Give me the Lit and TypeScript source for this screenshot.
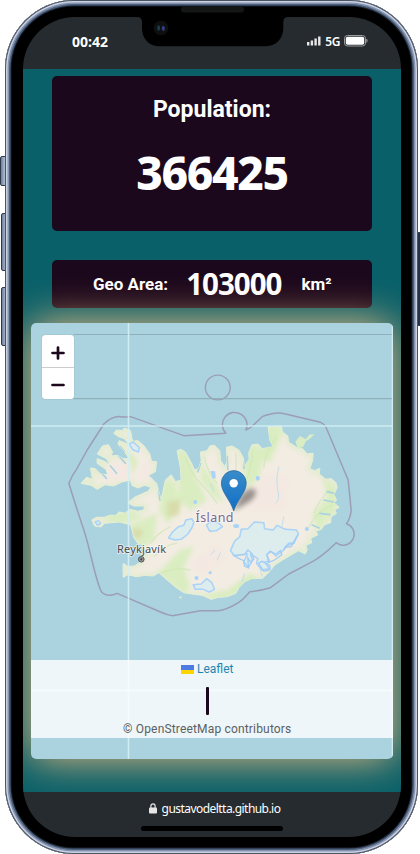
import { LitElement, html, css, svg } from "lit";
import { customElement } from "lit/decorators.js";

const LAND =
  "M190 100 L198 90 215 92 222 84 240 92 246 124 262 122 280 137 298 162 303 184 318 185 315 215 294 226 318 250 322 264 332 300 340 262 345 240 362 224 375 245 392 240 390 205 380 152 392 148 405 157 422 188 432 210 444 206 452 182 450 156 470 152 478 138 492 136 508 152 510 180 522 200 530 184 528 142 545 138 565 150 578 172 582 200 596 178 595 158 604 135 622 132 635 146 668 140 658 120 653 80 692 78 696 96 712 108 714 126 738 142 756 146 770 162 788 160 786 182 778 206 792 212 808 205 806 222 826 238 842 236 856 248 860 262 850 284 858 300 850 308 866 322 852 330 858 340 842 350 840 368 822 374 812 388 796 394 802 404 780 416 784 428 766 436 770 450 764 462 744 452 720 466 696 480 672 496 656 516 636 535 602 536 582 546 566 562 556 580 530 590 504 592 482 598 455 586 424 582 400 578 376 562 350 540 325 518 308 528 284 526 258 530 232 524 218 532 218 490 232 500 252 498 270 486 278 468 290 462 276 446 282 436 262 430 250 412 246 396 240 374 206 366 162 370 152 381 132 378 124 360 138 352 162 352 178 346 196 346 206 336 224 340 238 328 262 334 280 330 282 318 250 318 232 308 252 292 292 274 302 262 282 256 262 264 244 256 240 240 214 246 190 258 164 254 140 268 122 256 92 250 108 232 126 238 120 204 134 206 150 222 172 224 166 208 140 190 140 176 162 184 180 196 168 176 140 162 156 138 174 134 186 156 182 168 200 166 218 176 236 176 220 152 202 132 206 122 236 134 222 116 204 110Z";
const BORDER =
  "M55 250 Q65 225 78 208 L110 150 160 72 Q185 48 210 50 Q225 52 240 50 L400 107 526 100 A37 37 0 1 1 586 90 Q596 86 606 78 L635 50 Q645 45 660 42 Q685 36 702 41 L810 67 Q824 72 830 90 L893 240 902 330 Q900 355 888 371 A33 33 0 1 1 857 428 Q810 475 770 493 L715 522 660 563 Q630 572 598 575 Q575 602 560 610 Q530 628 505 632 H450 L366 647 Q350 645 330 636 L200 580 Q185 587 170 585 Q155 582 150 570 C130 520 120 450 100 390 Q70 300 55 250Z";

const GREENS = [
  "M380 150 L405 157 440 240 470 300 420 330 380 300 390 230Z",
  "M345 240 L375 250 390 330 350 370 325 330Z",
  "M600 135 L640 150 628 230 590 290 580 210Z",
  "M654 80 H692 L690 115 660 185 630 180Z",
  "M450 190 L500 260 520 310 490 290 452 240Z",
  "M815 235 L855 260 855 330 800 390 785 345 830 290Z",
  "M325 515 L390 450 430 440 400 500 420 560 400 578Z",
  "M240 375 L320 340 310 420 270 440Z",
  "M232 150 L262 180 250 220 235 210Z",
  "M455 585 L530 570 600 520 620 535 560 580 500 598Z",
  "M155 350 L240 335 280 355 200 370Z",
];

const GLACIERS = [
  "M540 452 L552 424 568 410 572 388 592 386 612 366 640 368 642 386 668 390 680 376 704 388 738 390 744 402 730 430 706 438 696 454 676 468 662 454 648 464 658 484 644 486 656 506 634 510 618 490 622 476 600 462 606 482 594 502 580 486 590 462 570 464 552 468Z",
  "M354 414 L366 396 384 380 400 376 406 360 424 356 430 368 424 384 412 402 392 418 374 420Z",
  "M452 552 L468 536 484 548 492 568 476 576 458 568 434 568 428 554Z",
  "M468 376 L480 364 504 368 516 380 498 392 478 394Z",
  "M236 132 L248 126 266 142 264 156 248 150Z",
  "M134 366 L144 362 150 370 142 376Z",
];

@customElement("country-map")
class CountryMap extends LitElement {
  static styles = css`
    :host {
      display: block;
      position: relative;
      width: 362.5px;
      height: 435.5px;
      margin-left: 0.5px;
      border-radius: 5px;
      box-shadow: 0 0 40px #eebd84;
    }
    .tiles {
      display: block;
      border-radius: 5px;
      background: #abd3df;
    }
    .place {
      font-family: "Noto Sans", sans-serif;
      paint-order: stroke;
      stroke: rgba(255, 255, 255, 0.55);
      stroke-width: 2px;
      stroke-linejoin: round;
    }
    .zoom {
      position: absolute;
      left: 11.5px;
      top: 12px;
      width: 32px;
      height: 64px;
      display: grid;
      grid-template-rows: 1fr 1fr;
      background: #fff;
      border-radius: 3px;
      overflow: hidden;
      box-shadow: 0 0 1px rgba(60, 80, 90, 0.6);
    }
    .zoom span {
      display: flex;
      align-items: center;
      justify-content: center;
      padding-top: 3px;
    }
    .zoom span + span {
      border-top: 1px solid #ccc;
    }
    .credit {
      position: absolute;
      left: 0;
      right: 0;
      bottom: 21px;
      height: 78px;
      box-sizing: border-box;
      padding: 2px 9px 0 0;
      display: flex;
      flex-direction: column;
      align-items: center;
      background: rgba(255, 255, 255, 0.8);
      font: 12px/15px Roboto, sans-serif;
      color: #5a6064;
    }
    .leaflet {
      display: flex;
      align-items: center;
      gap: 3px;
      color: #1d86b0;
    }
    .flag {
      width: 13px;
      height: 9px;
      background: linear-gradient(#4c7be1 50%, #ffd500 50%);
    }
    .bar {
      width: 3px;
      height: 28px;
      margin: 10px 0 7px;
      border-radius: 1px;
      background: #1c081c;
    }
    .osm {
      letter-spacing: 0.17px;
      white-space: nowrap;
    }
  `;

  render() {
    return html`
      <svg class="tiles" width="362.5" height="435.5" viewBox="30.5 323 362.5 435.5">
        <defs>
          <clipPath id="land"><path d=${LAND} /></clipPath>
          <filter id="soft"><feGaussianBlur stdDeviation="7" /></filter>
          <filter id="edge"><feGaussianBlur stdDeviation="1.5" /></filter>
          <filter id="shade" x="-50%" y="-50%" width="200%" height="200%"><feGaussianBlur stdDeviation="2.6" /></filter>
          <linearGradient id="pin" x1="0" y1="0" x2="0" y2="1">
            <stop offset="0" stop-color="#3a8cc9" />
            <stop offset="1" stop-color="#126fc6" />
          </linearGradient>
        </defs>
        <g transform="translate(50 400) scale(.33333)">
          <g filter="url(#edge)">
            <path d=${LAND} fill="#f2ece2" stroke="#e9efd9" stroke-width="3" />
            <path d="M735 125 L748 108 766 118 776 104 792 102 778 116 766 124 758 140 742 146Z" fill="#d9edc4" />
            <g clip-path="url(#land)">
              <g filter="url(#soft)">
                <path d=${LAND} fill="none" stroke="#dcecc6" stroke-width="18" opacity=".6" />
                ${GREENS.map((d) => svg`<path d=${d} fill="#d4edb9" opacity=".8" />`)}
                <path d="M350 305 L390 300 385 345 350 350Z M245 385 L280 390 265 420 248 412Z" fill="#d8dcaa" />
                <path d="M420 490 L500 430 530 480 450 530Z M650 220 L720 230 700 330 580 330 560 290Z M170 190 L240 180 240 240 160 250Z M255 240 L300 160 300 240Z" fill="#f4e9e2" />
              </g>
              <g fill="none" stroke="#cfe8b5" stroke-width="4" opacity=".75">
                <path d="M405 170 Q420 220 450 250 T500 310 M462 170 Q470 220 500 250 M555 160 Q560 220 550 240 M608 150 Q600 220 580 260 M680 110 Q640 160 640 205 M840 270 Q810 290 790 340 M845 315 Q800 330 770 390 M360 380 Q320 400 300 430 M310 470 Q350 430 380 430 M330 520 Q370 500 420 510" />
              </g>
              <g fill="none" stroke="#b7ddea" stroke-width="2.5">
                <path d="M685 200 Q675 240 682 270 T675 310 M700 350 L694 380 M618 228 L624 240 M480 250 L490 275 M575 545 L582 520 M636 530 L628 505 M480 465 L494 450 M500 480 L510 458 M535 300 L540 280" />
              </g>
              <g stroke="#abd3df" stroke-width="5" stroke-linecap="round" fill="none">
                <path d="M205 168 L225 190 M180 198 L198 220 M140 205 L168 235 M210 140 L222 155 M530 170 L532 210 M450 190 L442 215 M325 270 L328 300 M583 180 L580 205 M830 275 L850 280 M820 300 L848 306 M808 340 L838 344 M785 375 L806 384" />
              </g>
            </g>
            ${GLACIERS.map(
              (d) => svg`<path d=${d} fill="#ddecec" stroke="#a9d3f8" stroke-width="4.5" stroke-linejoin="round" />`
            )}
            <g fill="#a9d3f8">
              <circle cx="438" cy="534" r="6" />
              <circle cx="479" cy="518" r="5" />
              <circle cx="769" cy="387" r="6" />
              <ellipse cx="557" cy="378" rx="9" ry="6" />
              <ellipse cx="622" cy="235" rx="6" ry="7" />
              <circle cx="434" cy="306" r="6" />
              <path d="M480 213 L494 214 496 234 486 236Z" />
              <path d="M550 466 L582 464 592 450 604 460 610 478 600 486 592 474 594 504 582 498 580 482 566 476Z M624 490 L634 484 658 496 658 510 640 514Z M650 464 L658 454 676 462 690 452 694 464 672 480 654 488Z" fill="none" stroke="#a2cef6" stroke-width="4" />
              <path d="M700 450 L714 430 728 428 742 404 M708 442 L722 440 734 420" fill="none" stroke="#a2cef6" stroke-width="4" />
            </g>
            <circle cx="390" cy="592" r="3.5" fill="#dcecc6" />
          </g>
          <path d=${BORDER} fill="none" stroke="#9a97b3" stroke-width="4.5" stroke-linejoin="round" opacity=".9" />
        </g>
        <circle cx="217.3" cy="387.5" r="12.4" fill="none" stroke="#9a97b3" stroke-width="1.4" opacity=".9" />
        <path d="M73 334.5 H393 M73 398.6 H393" stroke="#8fb0ba" stroke-width="1.1" />
        <path d="M128 323 V759 M392 323 V759 M30 426 H393 M30 690.5 H393" stroke="#d4f0f6" stroke-width="1.6" opacity=".9" />

        <text class="place" x="116.5" y="553" font-size="11" fill="#4b4b4b" textLength="49">Reykjavík</text>
        <circle cx="140.8" cy="559.3" r="2.8" fill="#999" stroke="#555" stroke-width="1" />
        <circle cx="140.8" cy="559.3" r="1.1" fill="#444" />
        <text class="place" x="195" y="521.5" font-size="12.5" fill="#7d6591" textLength="38">Ísland</text>

        <path d="M233 511 L240 496 Q247 487 254 489 Q258 494 250 501Z" fill="#000" opacity=".38" filter="url(#shade)" />
        <path
          d="M233.2 511 C232 506 228.5 501 225 495 C222.6 491 220.9 487.5 220.9 483 A12.4 12.4 0 0 1 245.7 483 C245.7 487.5 244 491 241.500 495 C238 501 234.5 506 233.2 511Z"
          fill="url(#pin)"
          stroke="#2c6fa5"
          stroke-width=".8"
        />
        <circle cx="233.2" cy="483.3" r="4.2" fill="#fff" />
      </svg>
      <div class="zoom">
        <span><svg width="14" height="14"><path d="M7 1.5V12.5M1.5 7H12.5" stroke="#1c081c" stroke-width="2.7" stroke-linecap="round" /></svg></span>
        <span><svg width="14" height="14"><path d="M1.5 7H12.5" stroke="#1c081c" stroke-width="2.7" stroke-linecap="round" /></svg></span>
      </div>
      <div class="credit">
        <span class="leaflet"><span class="flag"></span>Leaflet</span>
        <span class="bar"></span>
        <span class="osm">© OpenStreetMap contributors</span>
      </div>
    `;
  }
}

@customElement("app-root")
class AppRoot extends LitElement {
  static styles = css`
    :host {
      display: block;
      position: relative;
      width: 420px;
      height: 854px;
      overflow: hidden;
      background: #fff;
      font-family: Roboto, sans-serif;
      color: #fff;
    }
    .key {
      position: absolute;
      left: 1px;
      width: 6px;
      box-sizing: border-box;
      border: 1px solid #30394a;
      border-radius: 2px 0 0 2px;
      background: linear-gradient(90deg, #6d7e99, #b3c2d8);
    }
    .mute { top: 156px; height: 30px; left: 0; }
    .up { top: 213px; height: 58px; }
    .down { top: 287px; height: 59px; }
    .power { left: 417px; top: 232px; height: 94px; background: #26324a; }
    .phone {
      position: relative;
      width: 413px;
      height: 854px;
      margin-left: 5px;
      box-sizing: border-box;
      padding: 17px 17px 17px 18px;
      border-radius: 69px;
      background: #000;
      box-shadow:
        inset 0 0 0 1px #4b5261,
        inset 0 0 0 2.5px #c9d2e2,
        inset 0 0 0 4px #8492ad,
        inset 0 0 0 5.5px #4b5f7e,
        inset 0 0 0 6.5px #1b222e;
    }
    .screen {
      display: flex;
      flex-direction: column;
      height: 820px;
      border-radius: 52px;
      overflow: hidden;
      background: #262b2f;
    }
    .notch {
      position: absolute;
      left: 125px;
      top: 5px;
    }
    .status {
      height: 52px;
      flex: none;
      box-sizing: border-box;
      padding: 0 33px 4px 49px;
      display: flex;
      align-items: center;
      justify-content: space-between;
    }
    .time {
      font: 700 14px "Noto Sans", sans-serif;
      letter-spacing: 0;
    }
    .signal {
      display: flex;
      align-items: center;
      gap: 4px;
      font: 600 12px "Noto Sans", sans-serif;
      letter-spacing: -0.4px;
    }
    .page {
      height: 722.5px;
      flex: none;
      box-sizing: border-box;
      padding: 7px 0 0 7px;
      overflow: hidden;
      background: #096069;
    }
    .card {
      width: 320px;
      margin-left: 22px;
      box-sizing: border-box;
      border-radius: 5px;
      background: #1c081c;
      font-weight: 700;
    }
    .population {
      height: 155px;
      padding-top: 20px;
      display: flex;
      flex-direction: column;
      align-items: center;
    }
    .label {
      font-size: 23px;
      line-height: 28px;
    }
    .count {
      font: 800 46px/60px "Noto Sans", sans-serif;
      letter-spacing: -1.3px;
      margin-top: 18px;
    }
    .area {
      height: 48px;
      margin-top: 29px;
      margin-bottom: 15px;
      padding-left: 41px;
      display: flex;
      align-items: center;
      font-size: 17px;
    }
    .area .size {
      font: 700 29.5px/40px "Noto Sans", sans-serif;
      letter-spacing: -1px;
      margin: 0 20px 0 18px;
    }
    .footer {
      flex: 1;
      display: flex;
      flex-direction: column;
      align-items: center;
      padding-top: 8px;
    }
    .url {
      display: flex;
      align-items: center;
      gap: 5px;
      height: 18px;
      padding-left: 5px;
      font: 12px/18px "Noto Sans", sans-serif;
      letter-spacing: -0.55px;
    }
    .home {
      width: 142px;
      height: 5px;
      margin-top: 8px;
      border-radius: 3px;
      background: #000;
    }
  `;

  render() {
    return html`
      <div class="key mute"></div>
      <div class="key up"></div>
      <div class="key down"></div>
      <div class="key power"></div>
      <div class="phone">
        <div class="screen">
          <div class="status">
            <span class="time">00:42</span>
            <span class="signal">
              <svg width="14" height="10" fill="#e8e8e8">
                <path d="M0 6h2.4v3.5H0zM3.7 4.500h2.4v5H3.7zM7.4 2.500h2.4v7H7.4zM11.1.5h2.4v9h-2.4z" />
              </svg>
              5G
              <svg width="24" height="12">
                <rect x=".5" y=".5" width="21" height="10.5" rx="3" fill="none" stroke="#9a9d9f" />
                <rect x="1.8" y="1.8" width="18.4" height="7.9" rx="1.8" fill="#fff" />
                <path d="M22.700 4q1.200 1.700 0 3.400z" fill="#9a9d9f" stroke="#9a9d9f" stroke-width=".6" />
              </svg>
            </span>
          </div>
          <div class="page">
            <div class="card population">
              <span class="label">Population:</span>
              <span class="count">366425</span>
            </div>
            <div class="card area">
              <span>Geo Area:</span><span class="size">103000</span><span>km²</span>
            </div>
            <country-map></country-map>
          </div>
          <div class="footer">
            <span class="url">
              <svg width="8" height="11">
                <rect x="0" y="4.5" width="8" height="6" rx="1" fill="#e6e6e6" />
                <path d="M1.9 5V3a2.1 2.1 0 0 1 4.2 0V5" fill="none" stroke="#e6e6e6" stroke-width="1.2" />
              </svg>
              gustavodeltta.github.io
            </span>
            <span class="home"></span>
          </div>
        </div>
        <svg class="notch" width="165" height="46" viewBox="130 5 165 46">
          <path d="M134 16.5 H292 V17 H288 Q283.5 17 283.3 22 V28 C283.3 39 276 46.3 265 46.3 H160 C149 46.3 142 39 142 28 V22 Q142 17 137 17Z" fill="#000" />
          <rect x="181" y="6.5" width="63" height="6" rx="3" fill="#141615" />
          <circle cx="161" cy="28" r="7.3" fill="#0d0f11" />
          <ellipse cx="158.7" cy="28" rx="1.5" ry="2.8" fill="#1b3d4c" />
          <ellipse cx="163.3" cy="28.3" rx="1.5" ry="2.6" fill="#343f86" />
        </svg>
      </div>
    `;
  }
}
